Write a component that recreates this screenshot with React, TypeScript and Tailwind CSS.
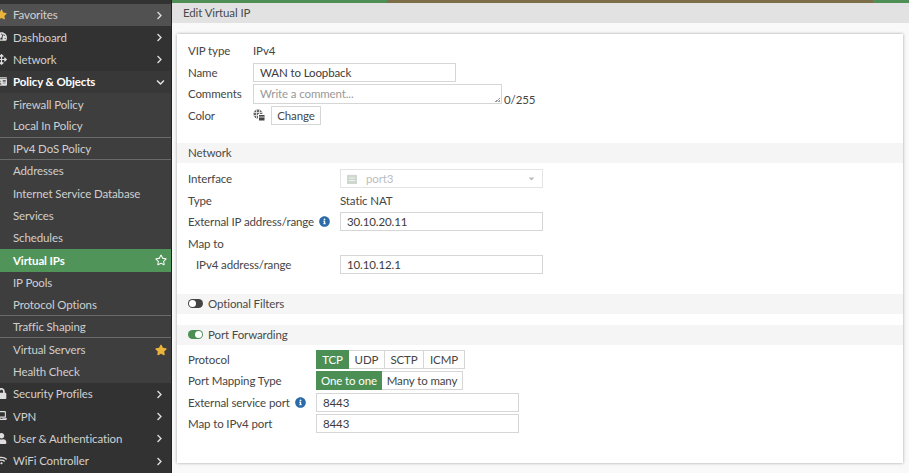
import React from "react";
import { FaStar, FaRegStar, FaTachometerAlt, FaArrowsAlt, FaLock, FaLaptop, FaUser, FaWifi, FaChevronRight, FaChevronDown, FaInfoCircle, FaCaretDown, FaIdCard } from "react-icons/fa";

type Item = { label: string; kind: "top" | "sub" | "fav"; icon?: React.ReactNode; bold?: boolean; open?: boolean; active?: boolean; star?: "on" | "off"; divider?: boolean };

const items: Item[] = [
  { label: "Favorites", kind: "fav", icon: <FaStar className="text-[#e9b33c]" /> },
  { label: "Dashboard", kind: "top", icon: <FaTachometerAlt /> },
  { label: "Network", kind: "top", icon: <FaArrowsAlt /> },
  { label: "Policy & Objects", kind: "top", icon: <FaIdCard />, bold: true, open: true },
  { label: "Firewall Policy", kind: "sub" },
  { label: "Local In Policy", kind: "sub", divider: true },
  { label: "IPv4 DoS Policy", kind: "sub", divider: true },
  { label: "Addresses", kind: "sub" },
  { label: "Internet Service Database", kind: "sub" },
  { label: "Services", kind: "sub" },
  { label: "Schedules", kind: "sub" },
  { label: "Virtual IPs", kind: "sub", active: true, star: "off" },
  { label: "IP Pools", kind: "sub" },
  { label: "Protocol Options", kind: "sub", divider: true },
  { label: "Traffic Shaping", kind: "sub", divider: true },
  { label: "Virtual Servers", kind: "sub", star: "on" },
  { label: "Health Check", kind: "sub" },
  { label: "Security Profiles", kind: "top", icon: <FaLock /> },
  { label: "VPN", kind: "top", icon: <FaLaptop /> },
  { label: "User & Authentication", kind: "top", icon: <FaUser /> },
  { label: "WiFi Controller", kind: "top", icon: <FaWifi /> },
];

function NavRow({ item }: { item: Item }) {
  const bg = item.active
    ? "bg-[#509459] text-white font-bold"
    : item.bold
    ? "bg-[#383838] text-white font-bold"
    : item.kind === "fav"
    ? "bg-[#515151] text-[#d2d2d2]"
    : item.kind === "sub"
    ? "bg-[#3e3e3e] text-[#cfcfcf]"
    : "bg-[#323232] text-[#d0d0d0]";
  return (
    <div className={`relative flex items-center h-[22.3px] shrink-0 pl-[13px] pr-[4px] ${bg} ${item.divider ? "border-b border-[#6a6a6a]" : ""}`}>
      {item.icon && <span className="absolute left-[-4px] top-[5px] text-[11px] text-[#dedede]">{item.icon}</span>}
      <span className="flex-1 whitespace-nowrap">{item.label}</span>
      {item.kind !== "sub" && (item.open ? <FaChevronDown className="text-[9px] mr-[2px] text-[#e6e6e6]" /> : <FaChevronRight className="text-[9px] mr-[3px] text-[#dcdcdc]" />)}
      {item.star === "off" && <FaRegStar className="text-[12px] text-white" />}
      {item.star === "on" && <FaStar className="text-[12px] text-[#e9b33c]" />}
    </div>
  );
}

function Row({ label, indent, w = "w-[152px]", children, info }: { label?: string; indent?: boolean; w?: string; children?: React.ReactNode; info?: boolean }) {
  return (
    <div className="flex items-center h-[21.5px]">
      <div className={`${w} shrink-0 flex items-center gap-[5px] whitespace-nowrap ${indent ? "pl-[8px]" : ""}`}>
        <span>{label}</span>
        {info && <FaInfoCircle className="text-[11px] text-[#2a6ba8]" />}
      </div>
      {children}
    </div>
  );
}

function Field({ value, w = "w-[203px]" }: { value: string; w?: string }) {
  return <div className={`${w} h-[19px] border border-[#d6d6d6] px-[6px] flex items-center text-[#3c3c3c]`}>{value}</div>;
}

function Seg({ items }: { items: [string, string][] }) {
  return (
    <div className="flex h-[19px]">
      {items.map(([t, width], i) => (
        <div key={t} className={`${width} flex items-center justify-center whitespace-nowrap ${i === 0 ? "bg-[#4c8f55] text-white" : "border border-l-0 border-[#d6d6d6] text-[#444]"}`}>{t}</div>
      ))}
    </div>
  );
}

function SectionHead({ children }: { children: React.ReactNode }) {
  return <div className="flex items-center h-[20px] bg-[#f5f5f5] px-[11px] gap-[5px] text-[#4a4a4a]">{children}</div>;
}

function Toggle({ on }: { on?: boolean }) {
  return (
    <span className={`relative inline-block w-[15px] h-[9px] rounded-full ${on ? "bg-[#4c8f55]" : "bg-[#444]"}`}>
      <span className={`absolute top-[1px] w-[7px] h-[7px] rounded-full bg-white ${on ? "right-[1px]" : "left-[1px]"}`} />
    </span>
  );
}

function ColorIcon() {
  return (
    <svg width="12" height="12" viewBox="0 0 12 12" className="mr-[6px] shrink-0">
      <circle cx="5" cy="5" r="4.5" fill="#666" />
      <path d="M1 3.5h8M1 6.5h8M3.5 1v8M6.5 1v8" stroke="#eee" strokeWidth="0.8" />
      <rect x="5" y="5" width="7" height="7" fill="#fff" />
      <rect x="6" y="6" width="5.5" height="5.5" fill="#444" />
      <path d="M6 8h5.5" stroke="#fff" strokeWidth="0.8" />
    </svg>
  );
}

function PortIcon() {
  return (
    <svg width="10" height="10" viewBox="0 0 10 10" className="shrink-0">
      <rect x="0" y="1" width="10" height="9" fill="#cfd8cf" />
      <path d="M3 1V0h4v1M2 4h6M2 6.5h6" stroke="#eef2ee" strokeWidth="1" fill="none" />
    </svg>
  );
}

export default function App() {
  return (
    <div className="w-[909px] h-[473px] overflow-hidden flex bg-[#f9f9f9] text-[11.5px] tracking-[-0.01em] text-[#464646] leading-none font-['Lato',sans-serif]">
      <aside className="w-[172px] shrink-0 flex flex-col bg-[#323232] border-r border-[#222] pt-[4px]">
        {items.map((it) => <NavRow key={it.label} item={it} />)}
      </aside>
      <main className="flex-1 min-w-0 flex flex-col">
        <div className="h-[3px] shrink-0 flex">
          <div className="w-[215px] bg-[#4f8f55]" />
          <div className="flex-1 bg-[#7c6d49]" />
          <div className="w-[36px] bg-[#4f8f55]" />
        </div>
        <div className="h-[20px] shrink-0 bg-[#e2e2e2] flex items-center pl-[11px] text-[#4a4a4a]">Edit Virtual IP</div>
        <div className="pt-[11px] pl-[5px] pr-[6px] pb-[10px] flex-1 min-h-0 flex">
          <section className="flex-1 bg-white shadow-[0_0_3px_rgba(0,0,0,0.35)] flex flex-col">
            <div className="pt-[6px] pl-[11px]">
              <Row label="VIP type" w="w-[65px]"><span>IPv4</span></Row>
              <Row label="Name" w="w-[65px]"><Field value="WAN to Loopback" /></Row>
              <Row label="Comments" w="w-[65px]">
                <div className="relative w-[249px] h-[20px] border border-[#d6d6d6] px-[6px] flex items-center text-[#999]">Write a comment...
                  <span className="absolute right-[1px] bottom-[1px] w-[5px] h-[5px] bg-[linear-gradient(135deg,transparent_50%,#999_50%,#999_62%,transparent_62%,transparent_78%,#999_78%)]" />
                </div>
                <span className="self-end ml-[2px] mb-[-1px]">0/255</span>
              </Row>
              <Row label="Color" w="w-[65px]">
                <ColorIcon />
                <div className="w-[50px] h-[19px] border border-[#d6d6d6] flex items-center justify-center">Change</div>
              </Row>
            </div>
            <div className="mt-[17px]"><SectionHead>Network</SectionHead></div>
            <div className="pt-[5px] pl-[11px]">
              <Row label="Interface">
                <div className="w-[203px] h-[19px] border border-[#e4e4e4] pl-[6px] pr-[6px] flex items-center text-[#bdbdbd] gap-[9px]">
                  <PortIcon />
                  <span className="flex-1">port3</span>
                  <FaCaretDown className="text-[9px]" />
                </div>
              </Row>
              <Row label="Type"><span>Static NAT</span></Row>
              <Row label="External IP address/range" info><Field value="30.10.20.11" /></Row>
              <Row label="Map to" />
              <Row label="IPv4 address/range" indent><Field value="10.10.12.1" /></Row>
            </div>
            <div className="mt-[18px]"><SectionHead><Toggle /><span>Optional Filters</span></SectionHead></div>
            <div className="mt-[11px]"><SectionHead><Toggle on /><span>Port Forwarding</span></SectionHead></div>
            <div className="pt-[4px] pl-[11px]">
              <Row label="Protocol" w="w-[128px]"><Seg items={[["TCP", "w-[33px]"], ["UDP", "w-[36px]"], ["SCTP", "w-[39px]"], ["ICMP", "w-[41px]"]]} /></Row>
              <Row label="Port Mapping Type" w="w-[128px]"><Seg items={[["One to one", "w-[66px]"], ["Many to many", "w-[81px]"]]} /></Row>
              <Row label="External service port" w="w-[128px]" info><Field value="8443" /></Row>
              <Row label="Map to IPv4 port" w="w-[128px]"><Field value="8443" /></Row>
            </div>
          </section>
        </div>
      </main>
    </div>
  );
}
